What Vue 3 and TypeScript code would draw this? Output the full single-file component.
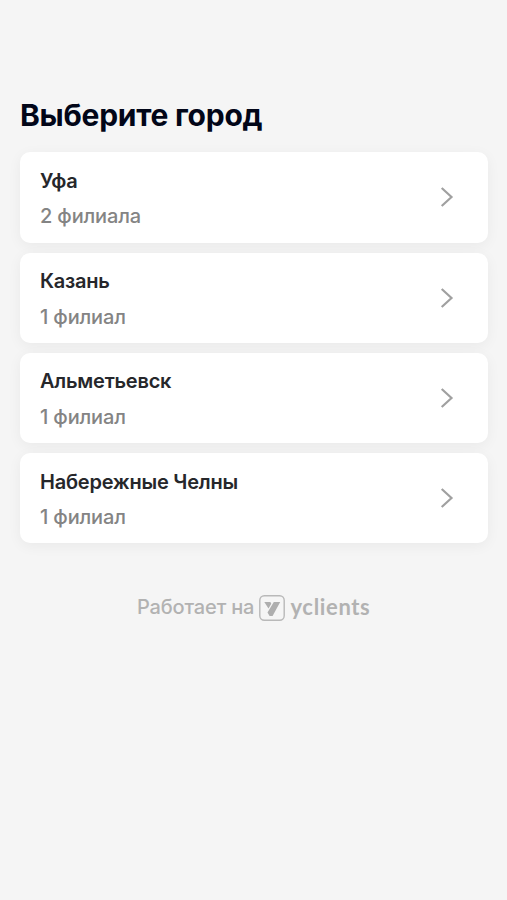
<script setup lang="ts">
interface City {
  name: string
  branches: string
}

const cities: City[] = [
  { name: 'Уфа', branches: '2 филиала' },
  { name: 'Казань', branches: '1 филиал' },
  { name: 'Альметьевск', branches: '1 филиал' },
  { name: 'Набережные Челны', branches: '1 филиал' },
]
</script>

<template>
  <main class="page">
    <h1 class="title">Выберите город</h1>
    <ul class="list">
      <li v-for="city in cities" :key="city.name" class="card">
        <div class="info">
          <span class="name">{{ city.name }}</span>
          <span class="count">{{ city.branches }}</span>
        </div>
        <svg class="chevron" width="14" height="22" viewBox="0 0 14 22" fill="none">
          <path d="M1.7 2 L11.5 11 L1.7 20" stroke="#a0a0a0" stroke-width="2.2" />
        </svg>
      </li>
    </ul>
    <footer class="footer">
      <span class="powered">Работает на</span>
      <svg class="logo" width="26" height="26" viewBox="0 0 26 26" fill="none">
        <rect x="0.8" y="0.8" width="24.4" height="24.4" rx="4.5" stroke="#b9b9b9" stroke-width="1.4" />
        <path d="M5.3 7 H11.4 L12.3 8.8 L9.5 13.6 Z M14.8 7 H21.2 L13.6 21 H10.6 L8.5 17.4 Z" fill="#aeaeae" />
      </svg>
      <span class="brand">yclients</span>
    </footer>
  </main>
</template>

<style>
body {
  background: #f5f5f5;
}
</style>

<style scoped>
.page {
  box-sizing: border-box;
  min-height: 900px;
  padding: 95px 19.5px 0 20px;
  font-family: Inter, "Liberation Sans", sans-serif;
}
.title {
  margin: 0;
  font-size: 30px;
  line-height: 40px;
  font-weight: 700;
  letter-spacing: -0.26px;
  color: #020618;
}
.list {
  display: flex;
  flex-direction: column;
  gap: 10px;
  margin: 17.4px 0 0;
  padding: 0;
  list-style: none;
}
.card {
  box-sizing: border-box;
  display: flex;
  align-items: center;
  justify-content: space-between;
  height: 90.2px;
  padding: 0 34px 0 20px;
  border-radius: 10px;
  background: #fff;
  box-shadow: 0 3px 14px rgba(0, 0, 0, 0.05);
}
.info {
  display: flex;
  flex-direction: column;
  gap: 7.4px;
  padding-top: 2.4px;
}
.name {
  font-size: 20px;
  line-height: 28px;
  font-weight: 600;
  letter-spacing: -0.23px;
  color: #26272b;
}
.count {
  font-size: 20px;
  line-height: 28px;
  font-weight: 500;
  letter-spacing: -0.15px;
  color: #848484;
}
.footer {
  display: flex;
  align-items: center;
  justify-content: center;
  height: 26px;
  margin-top: 52px;
  color: #b2b2b2;
}
.powered {
  margin-top: -2px;
  font-size: 20px;
  line-height: 26px;
  font-weight: 500;
  letter-spacing: -0.17px;
}
.logo {
  margin: 0 5px 0 5.2px;
}
.brand {
  margin-top: -1.6px;
  font-family: Lato, Inter, sans-serif;
  font-size: 22px;
  line-height: 26px;
  font-weight: 700;
  letter-spacing: 0.65px;
}
</style>
